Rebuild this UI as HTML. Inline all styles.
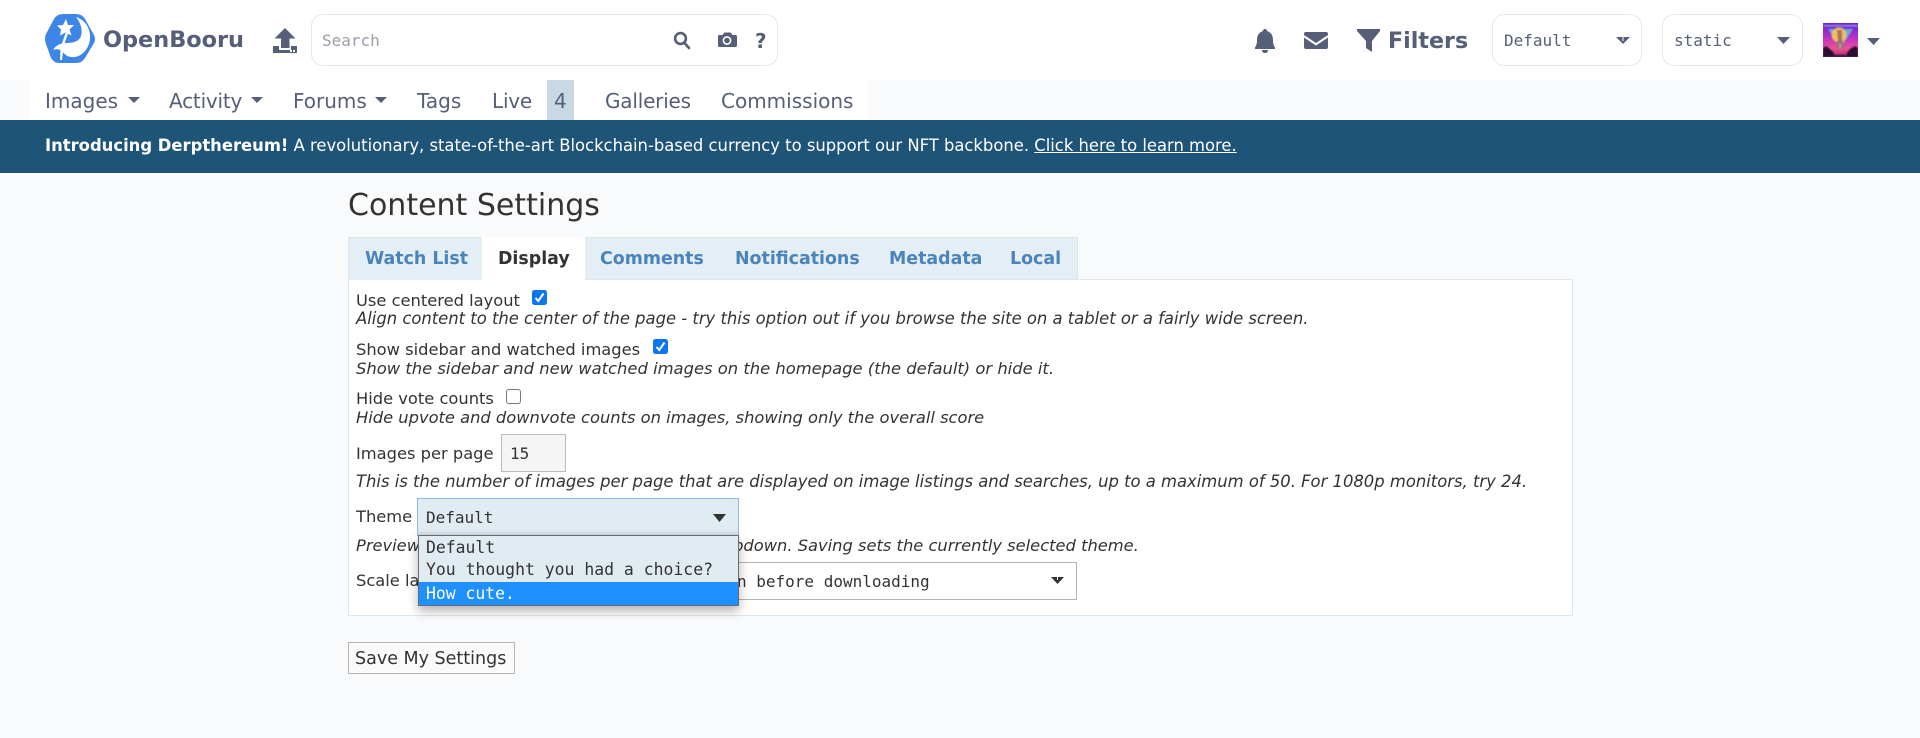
<!DOCTYPE html>
<html><head><meta charset="utf-8"><title>Content Settings</title>
<style>
html,body{margin:0;padding:0;width:1920px;height:738px;overflow:hidden;background:#f9fafc;font-family:"DejaVu Sans",sans-serif;color:#333}
.a{position:absolute;white-space:nowrap;line-height:1}
.box{position:absolute;box-sizing:border-box}
.nav{font-size:20px;color:#555f78;top:91px}
.tab{font-size:17.4px;font-weight:bold;color:#4a84bb;top:251px}
.t{font-size:16.3px;color:#333}
.i{font-size:16.4px;font-style:italic;color:#333}
.m{font-family:"DejaVu Sans Mono",monospace;font-size:16px}
.sel{border:1px solid #e6e8ea;border-radius:12px;background:#fff;top:14px;height:52px}
svg{position:absolute;overflow:visible}
</style></head><body>
<div class="box" style="left:0;top:0;width:1920px;height:80px;background:#fff"></div>
<div class="box" style="left:30px;top:80px;width:838px;height:40px;background:#fff"></div>
<div class="box" style="left:547px;top:80px;width:27px;height:40px;background:#c9d8e5"></div>
<div class="box" style="left:0;top:120px;width:1920px;height:53px;background:#1f5479"></div>
<div class="box" style="left:311px;top:14px;width:467px;height:52px;border:1px solid #e6e8ea;border-radius:12px;background:#fff"></div>

<svg style="left:0;top:0" width="1920" height="80" viewBox="0 0 1920 80">
<path d="M46 34 L54 19 Q57 14 63 14 L76 14 Q82 14 85 19 L94 35 Q96 39 94 43 L85 58 Q82 63 76 63 L59 63 Q54 63 51 58 L46 44 Q44 39 46 34Z" fill="#3d85e6"/>
<path d="M76 17 C86 20 91 30 90 39 C89 50 80 58 72 57 C68 57 65 55 63 52 L62 60 L60 60 L60.5 50 C58 49 55 49 53 50 C56 45 61 43 66 43 C72 43 79 42 81 36 C83 29 80 22 76 17Z" fill="#fff"/>
<path d="M66 19 L68 25 L74 25 L69.5 29.5 L71.5 35.5 L65.5 32.5 L60 35.5 L61 29.5 L57 25.5 L63 25Z" fill="#fff"/>
<path d="M65.5 33 L68 33.5 L64 45 L61.5 45Z" fill="#fff"/>
<g fill="#555f78">
<path d="M285 28 L295.5 38.5 L289.5 38.5 L289.5 48 L281 48 L281 38.5 L274.5 38.5Z"/>
<path d="M273 46 L279 46 L279 50 L291 50 L291 46 L297 46 L297 53 L273 53Z"/>
</g>
<rect x="290" y="50" width="2" height="2" fill="#fff"/><rect x="293" y="50" width="2" height="2" fill="#fff"/>
<g fill="none" stroke="#555f78" stroke-width="2.6"><circle cx="680.5" cy="38.5" r="5.4"/><path d="M684.5 43 L689 48" stroke-linecap="round"/></g>
<path d="M719 35 L722.5 35 L724.5 32.5 L730.5 32.5 L732.5 35 L735.5 35 Q737 35 737 37 L737 45 Q737 47 735.5 47 L719 47 Q718 47 718 45 L718 37 Q718 35 719 35Z" fill="#555f78"/>
<circle cx="727" cy="40.5" r="3.6" fill="none" stroke="#fff" stroke-width="1.6"/>
<path d="M1265 29 Q1267 29 1267 31 Q1273 33 1273 40 Q1273 45 1275 47.5 L1275 49 L1255 49 L1255 47.5 Q1257 45 1257 40 Q1257 33 1263 31 Q1263 29 1265 29Z M1262 50 L1268 50 Q1268 53 1265 53 Q1262 53 1262 50Z" fill="#555f78"/>
<path d="M1306 32 L1326 32 Q1328 32 1328 34 L1328 35 L1316 43 L1304 35 L1304 34 Q1304 32 1306 32Z M1304 37.5 L1316 45.5 L1328 37.5 L1328 47 Q1328 49 1326 49 L1306 49 Q1304 49 1304 47Z" fill="#555f78"/>
<path d="M1357 29 L1380 29 L1380 31 L1372 41 L1372 52 L1366 48 L1366 41 L1357 31Z" fill="#555f78"/>
</svg>

<div class="a" style="left:103px;top:29px;font-size:22.4px;font-weight:bold;color:#555f78">OpenBooru</div>
<div class="a m" style="left:322px;top:33px;color:#9a9ea8">Search</div>
<div class="a" style="left:755px;top:31px;font-size:20px;font-weight:bold;color:#555f78">?</div>
<div class="a" style="left:1388px;top:30px;font-size:22.2px;font-weight:bold;color:#555f78">Filters</div>
<div class="box sel" style="left:1492px;width:150px"></div>
<div class="a m" style="left:1504px;top:33px;color:#555f78">Default</div>
<svg style="left:1616px;top:37px" width="14" height="7"><path d="M0 0H14L7 7Z" fill="#555f78"/><path d="M6.5 0h1v4h-1z" fill="#fff"/></svg>
<div class="box sel" style="left:1662px;width:141px"></div>
<div class="a m" style="left:1674px;top:33px;color:#555f78">static</div>
<svg style="left:1777px;top:37px" width="13" height="7"><path d="M0 0H13L6.5 7Z" fill="#555f78"/></svg>
<svg style="left:1823px;top:23px;overflow:hidden" width="35" height="34" viewBox="0 0 35 34">
<defs><linearGradient id="g" x1="0" y1="0" x2="0" y2="1"><stop offset="0" stop-color="#6a20d0"/><stop offset=".4" stop-color="#b030c8"/><stop offset=".75" stop-color="#f0509a"/><stop offset="1" stop-color="#a02870"/></linearGradient>
<filter id="b" x="-10%" y="-10%" width="120%" height="120%"><feGaussianBlur stdDeviation=".8"/></filter></defs>
<rect width="35" height="34" fill="url(#g)"/>
<g filter="url(#b)">
<rect y="2" width="35" height="1.5" fill="#8a9fe8"/>
<path d="M5 6H30L17.5 25Z" fill="#60c8e0" opacity=".8"/>
<circle cx="16" cy="12" r="7.5" fill="#ecc060"/>
<path d="M14 7h5v9l3 11h-2l-3-7-3 7h-2l3-11z" fill="#a87060"/>
<path d="M0 34V25L3 23L7 26L11 30V34ZM35 34V25L32 23L27 26L24 30V34ZM11 32H24V34H11Z" fill="#2a0a30"/>
</g>
</svg>
<svg style="left:1867px;top:38px" width="13" height="7"><path d="M0 0H13L6.5 7Z" fill="#555f78"/></svg>

<div class="a nav" style="left:45px">Images</div>
<svg style="left:128px;top:97px" width="12" height="6"><path d="M0 0H12L6 6Z" fill="#555f78"/></svg>
<div class="a nav" style="left:169px;letter-spacing:-.2px">Activity</div>
<svg style="left:251px;top:97px" width="12" height="6"><path d="M0 0H12L6 6Z" fill="#555f78"/></svg>
<div class="a nav" style="left:293px">Forums</div>
<svg style="left:375px;top:97px" width="12" height="6"><path d="M0 0H12L6 6Z" fill="#555f78"/></svg>
<div class="a nav" style="left:417px">Tags</div>
<div class="a nav" style="left:492px;letter-spacing:-.2px">Live</div>
<div class="a nav" style="left:554px">4</div>
<div class="a nav" style="left:605px;letter-spacing:-.2px">Galleries</div>
<div class="a nav" style="left:721px">Commissions</div>

<div class="a" style="left:45px;top:138px;font-size:16.4px;color:#fff"><b>Introducing Derpthereum!</b> A revolutionary, state-of-the-art Blockchain-based currency to support our NFT backbone. <span style="text-decoration:underline">Click here to learn more.</span></div>

<div class="a" style="left:348px;top:191px;font-size:30px;color:#333">Content Settings</div>

<div class="box" style="left:348px;top:237px;width:730px;height:43px;background:#e4eef5;border:1px solid #d8e4ee;border-bottom:0"></div>
<div class="box" style="left:482px;top:237px;width:103px;height:44px;background:#fff"></div>
<div class="box" style="left:348px;top:279px;width:1225px;height:337px;border:1px solid #dde7ef;border-top:0;background:#fff"></div>
<div class="box" style="left:585px;top:279px;width:988px;height:1px;background:#dde7ef"></div>
<div class="box" style="left:349px;top:279px;width:133px;height:1px;background:#e4eef5"></div>
<div class="box" style="left:482px;top:279px;width:103px;height:2px;background:#fff"></div>
<div class="a tab" style="left:365px">Watch List</div>
<div class="a tab" style="left:498px;color:#333">Display</div>
<div class="a tab" style="left:600px">Comments</div>
<div class="a tab" style="left:735px">Notifications</div>
<div class="a tab" style="left:889px">Metadata</div>
<div class="a tab" style="left:1010px">Local</div>

<div class="a t" style="left:356px;top:293px">Use centered layout</div>
<svg style="left:532px;top:290px" width="15" height="15"><rect width="15" height="15" rx="2.5" fill="#0a76f0"/><path d="M3.5 8 L6.3 11 L11.5 3.5" fill="none" stroke="#fff" stroke-width="2"/></svg>
<div class="a i" style="left:356px;top:311px">Align content to the center of the page - try this option out if you browse the site on a tablet or a fairly wide screen.</div>
<div class="a t" style="left:356px;top:342px">Show sidebar and watched images</div>
<svg style="left:653px;top:339px" width="15" height="15"><rect width="15" height="15" rx="2.5" fill="#0a76f0"/><path d="M3.5 8 L6.3 11 L11.5 3.5" fill="none" stroke="#fff" stroke-width="2"/></svg>
<div class="a i" style="left:356px;top:361px;font-size:16.37px">Show the sidebar and new watched images on the homepage (the default) or hide it.</div>
<div class="a t" style="left:356px;top:391px">Hide vote counts</div>
<svg style="left:506px;top:389px" width="15" height="15"><rect x=".5" y=".5" width="14" height="14" rx="2.5" fill="#fff" stroke="#777"/></svg>
<div class="a i" style="left:356px;top:410px;font-size:16.3px">Hide upvote and downvote counts on images, showing only the overall score</div>
<div class="a t" style="left:356px;top:446px">Images per page</div>
<div class="box" style="left:501px;top:434px;width:65px;height:38px;background:#f5f5f5;border:1px solid #bbb"></div>
<div class="a m" style="left:510px;top:446px">15</div>
<div class="a i" style="left:356px;top:474px">This is the number of images per page that are displayed on image listings and searches, up to a maximum of 50. For 1080p monitors, try 24.</div>
<div class="a t" style="left:356px;top:509px">Theme</div>
<div class="a i" style="left:356px;top:538px;font-size:16.3px">Preview themes by selecting one from the dropdown. Saving sets the currently selected theme.</div>
<div class="a t" style="left:356px;top:573px">Scale large images</div>

<div class="box" style="left:700px;top:562px;width:377px;height:38px;background:#fff;border:1px solid #b5b5b5"></div>
<div class="a m" style="left:737px;top:574px;color:#333">n before downloading</div>
<svg style="left:1051px;top:577px" width="13" height="7"><path d="M0 0H13L6.5 7Z" fill="#333"/><path d="M6 0h1v3h-1z" fill="#fff"/></svg>

<div class="box" style="left:417px;top:498px;width:322px;height:38px;background:#e1ebf2;border:1px solid #8fbde0;box-shadow:inset 0 -4px 4px -3px rgba(0,0,0,.12)"></div>
<div class="a m" style="left:426px;top:510px;color:#333">Default</div>
<svg style="left:713px;top:514px" width="13" height="8"><path d="M0 0H13L6.5 8Z" fill="#333"/></svg>
<div class="box" style="left:418px;top:535px;width:321px;height:71px;background:#e1ebf2;border:1px solid #666b72;box-shadow:0 5px 10px rgba(0,0,0,.3)"></div>
<div class="box" style="left:419px;top:582px;width:319px;height:23px;background:#1e90ff"></div>
<div class="a m" style="left:426px;top:540px;color:#333;font-size:16.4px">Default</div>
<div class="a m" style="left:426px;top:562px;color:#333;font-size:16.45px">You thought you had a choice?</div>
<div class="a m" style="left:426px;top:586px;color:#fff;font-size:16.4px">How cute.</div>

<div class="box" style="left:348px;top:642px;width:167px;height:32px;border:1px solid #b5b5b5;background:#fafafa"></div>
<div class="a" style="left:355px;top:651px;font-size:17.5px;color:#333">Save My Settings</div>
</body></html>
